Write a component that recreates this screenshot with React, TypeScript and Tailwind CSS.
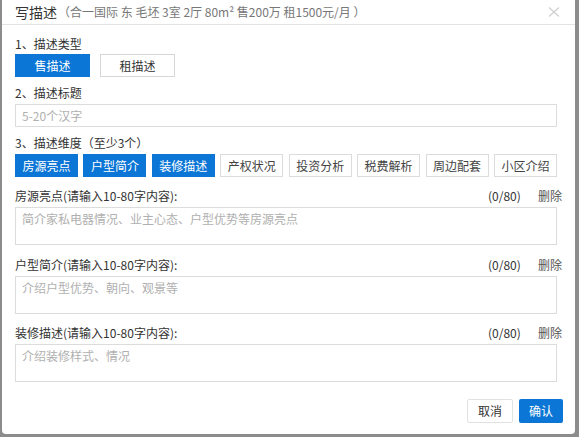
import React from "react";

const font = { fontFamily: '"Noto Sans CJK SC", "Liberation Sans", sans-serif' };

const tags = [
  { label: "房源亮点", on: true },
  { label: "户型简介", on: true },
  { label: "装修描述", on: true },
  { label: "产权状况", on: false },
  { label: "投资分析", on: false },
  { label: "税费解析", on: false },
  { label: "周边配套", on: false },
  { label: "小区介绍", on: false },
];

const fields = [
  { title: "房源亮点", hint: "简介家私电器情况、业主心态、户型优势等房源亮点", mt: "mt-[12px]" },
  { title: "户型简介", hint: "介绍户型优势、朝向、观景等", mt: "mt-[13px]" },
  { title: "装修描述", hint: "介绍装修样式、情况", mt: "mt-[12px]" },
];

function Field({ title, hint, mt }: { title: string; hint: string; mt: string }) {
  return (
    <div className={mt}>
      <div className="flex h-[14px] w-[547px] items-center text-[12px] leading-[14px] text-[#333]">
        <span className="flex-1">{title}(请输入10-80字内容):</span>
        <span className="w-[37px] text-[#333]">(0/80)</span>
        <span className="ml-[13px] text-[#555]">删除</span>
      </div>
      <div className="mt-[4px] h-[38px] w-[542px] border border-[#dcdcdc] px-[6px] pt-[3px] text-[12px] leading-[16px] text-[#b0b0b0]">
        {hint}
      </div>
    </div>
  );
}

export default function App() {
  return (
    <div className="h-[437px] w-[579px] bg-[#8c8c8c] pl-[2px] pr-[4px] pb-[3px]" style={font}>
      <div className="h-[434px] w-[573px] rounded-b-[4px] bg-white">
        {/* header */}
        <div className="flex h-[25px] items-center border-b border-[#e3e3e3] pl-[13px] pr-[15px]">
          <span className="text-[14px] leading-[16px] text-[#333]">写描述</span>
          <span className="ml-[1px] text-[12px] leading-[16px] text-[#777]">
            （合一国际 东 毛坯 3室 2厅 80m² 售200万 租1500元/月 ）
          </span>
          <svg className="ml-auto" width="12" height="12" viewBox="0 0 12 12">
            <path d="M1 1.5L11 10.5M11 1.5L1 10.5" stroke="#cfcfcf" strokeWidth="1.2" fill="none" />
          </svg>
        </div>

        <div className="pl-[13px]">
          <div className="mt-[12px] text-[12px] leading-[14px] text-[#333]">1、描述类型</div>
          <div className="mt-[3px] flex gap-[10px]">
            <button className="h-[23px] w-[75px] bg-[#0c76d6] text-[12px] text-white">售描述</button>
            <button className="h-[23px] w-[75px] border border-[#d6d6d6] bg-white text-[12px] text-[#333]">租描述</button>
          </div>

          <div className="mt-[9px] text-[12px] leading-[14px] text-[#333]">2、描述标题</div>
          <div className="mt-[4px] flex h-[23px] w-[542px] items-center border border-[#dcdcdc] px-[6px] text-[12px] text-[#b0b0b0]">
            5-20个汉字
          </div>

          <div className="mt-[9px] text-[12px] leading-[14px] text-[#333]">3、描述维度（至少3个）</div>
          <div className="mt-[4px] flex w-[542px] justify-between">
            {tags.map((t) => (
              <span
                key={t.label}
                className={
                  t.on
                    ? "flex h-[23px] w-[63px] items-center justify-center bg-[#0c76d6] text-[12px] text-white"
                    : "flex h-[23px] w-[63px] items-center justify-center border border-[#dcdcdc] bg-white text-[12px] text-[#444]"
                }
              >
                {t.label}
              </span>
            ))}
          </div>

          {fields.map((f) => (
            <Field key={f.title} {...f} />
          ))}

          <div className="mt-[17px] flex w-[548px] justify-end gap-[6px]">
            <button className="h-[24px] w-[46px] rounded-[2px] border border-[#e2e2e2] bg-white text-[12px] text-[#333]">取消</button>
            <button className="h-[24px] w-[44px] rounded-[2px] bg-[#0c76d6] text-[12px] text-white">确认</button>
          </div>
        </div>
      </div>
    </div>
  );
}
